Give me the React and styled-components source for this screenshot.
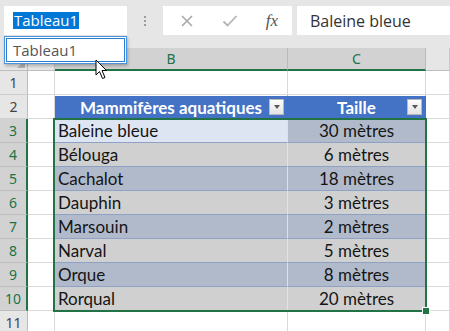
import React from 'react';
import styled, { createGlobalStyle } from 'styled-components';

const Global = createGlobalStyle`
  html, body { margin: 0; padding: 0; background: #fff; overflow: hidden; }
  * { box-sizing: border-box; }
`;

const Page = styled.div`
  position: relative;
  width: 450px;
  height: 331px;
  overflow: hidden;
  font-family: "Open Sans", "Noto Sans", sans-serif;
`;

const TopBar = styled.div`
  display: flex;
  align-items: flex-start;
  height: 48px;
  padding: 6px 0 0 4px;
  background: #e6e6e6;
`;

const NameBox = styled.div`
  position: relative;
  width: 123px;
  height: 29px;
  background: #fff;
  display: flex;
  align-items: center;
  padding-left: 9px;
  font-size: 15px;
`;

const Selected = styled.span`
  background: #0078d7;
  color: #fff;
  line-height: 17px;
  padding: 0 1px;
`;

const Dropdown = styled.div`
  position: absolute;
  top: 30px;
  left: 0;
  width: 123px;
  height: 28px;
  background: #fff;
  border: 1px solid #4d93d9;
  box-shadow: inset 0 0 0 1px #fff, inset 0 0 0 2px #2a7fd4, 1px 2px 3px rgba(0, 0, 0, 0.25);
  display: flex;
  align-items: center;
  padding-left: 8px;
  font-size: 15px;
  color: #555;
  z-index: 3;
`;

const Dots = styled.div`
  width: 36px;
  height: 29px;
  display: flex;
  flex-direction: column;
  align-items: center;
  justify-content: center;
  gap: 2px;
  span {
    width: 2px;
    height: 2px;
    background: #9a9a9a;
  }
`;

const FxButtons = styled.div`
  width: 129px;
  height: 29px;
  background: #fff;
  display: flex;
  align-items: center;
  justify-content: space-between;
  padding: 0 14px 0 17px;
`;

const Fx = styled.span`
  font-family: "Liberation Serif", serif;
  font-style: italic;
  font-size: 17px;
  color: #555;
`;

const FormulaInput = styled.div`
  flex: 1;
  margin-left: 5px;
  height: 29px;
  background: #fff;
  display: flex;
  align-items: center;
  padding-left: 13px;
  font-size: 16px;
  color: #333;
`;

const Sheet = styled.div`
  position: relative;
  display: grid;
  grid-template-columns: 28px 27px 233px 138px 1fr;
  grid-template-rows: 23px repeat(11, 24px);
`;

const Corner = styled.div`
  position: relative;
  background: #e6e6e6;
  border-right: 1px solid #bdbdbd;
  border-bottom: 1px solid #bdbdbd;
  &::after {
    content: '';
    position: absolute;
    right: 2px;
    bottom: 2px;
    border-left: 8px solid transparent;
    border-bottom: 8px solid #b4b4b4;
  }
`;

const ColHead = styled.div`
  display: flex;
  align-items: center;
  justify-content: center;
  font-family: "Noto Sans", sans-serif;
  font-size: 14px;
  background: ${p => (p.$selected ? '#d2d2d2' : '#e6e6e6')};
  color: ${p => (p.$selected ? '#217346' : '#444')};
  border-right: 1px solid ${p => (p.$selected ? '#bababa' : '#c8c8c8')};
  border-bottom: ${p => (p.$selected ? '2px solid #217346' : '1px solid #bdbdbd')};
`;

const RowHead = styled.div`
  display: flex;
  align-items: center;
  justify-content: center;
  font-family: "Noto Sans", sans-serif;
  font-size: 14px;
  background: ${p => (p.$selected ? '#d2d2d2' : '#e6e6e6')};
  color: ${p => (p.$selected ? '#217346' : '#444')};
  border-bottom: 1px solid ${p => (p.$selected ? '#bdbdbd' : '#cfcfcf')};
  border-right: ${p => (p.$selected ? '2px solid #217346' : '1px solid #bdbdbd')};
`;

const Cell = styled.div`
  border-right: 1px solid #dadada;
  border-bottom: 1px solid #dadada;
`;

const TableHead = styled.div`
  display: grid;
  grid-template-columns: 18px 1fr 18px;
  align-items: center;
  background: #4472c4;
  border-top: 1px solid #fff;
  border-bottom: 1px solid #4472c4;
  border-right: 1px solid #4472c4;
  color: #fff;
  font-family: Lato, sans-serif;
  font-weight: 700;
  font-size: 17px;
  text-align: center;
`;

const FilterButton = styled.span`
  width: 15px;
  height: 16px;
  display: flex;
  align-items: center;
  justify-content: center;
  background: linear-gradient(#fdfdfd, #e4e4e4);
  border: 1px solid #b9b9b9;
  &::after {
    content: '';
    border-left: 3.5px solid transparent;
    border-right: 3.5px solid transparent;
    border-top: 4px solid #595959;
  }
`;

const bandColor = p => {
  if (p.$active) return '#dde5f3';
  return p.$dark ? '#b1bacb' : '#d0d0d0';
};

const TableCell = styled.div`
  display: flex;
  align-items: center;
  justify-content: ${p => (p.$center ? 'center' : 'flex-start')};
  padding-left: ${p => (p.$center ? '0' : '3px')};
  background: ${bandColor};
  border-bottom: 1px solid #8ea2c6;
  border-right: 1px solid #e2e2e2;
  color: #151515;
  font-family: Lato, sans-serif;
  font-size: 17px;
`;

const Selection = styled.div`
  position: absolute;
  left: 53px;
  top: 70px;
  width: 374px;
  height: 194px;
  border: 2px solid #217346;
  pointer-events: none;
  &::after {
    content: '';
    position: absolute;
    right: -5px;
    bottom: -5px;
    width: 6px;
    height: 6px;
    background: #217346;
    border: 1px solid #fff;
  }
`;

const Cursor = styled.svg`
  position: absolute;
  left: 95px;
  top: 59px;
  z-index: 4;
`;

const animals = [
  ['Baleine bleue', '30 mètres'],
  ['Bélouga', '6 mètres'],
  ['Cachalot', '18 mètres'],
  ['Dauphin', '3 mètres'],
  ['Marsouin', '2 mètres'],
  ['Narval', '5 mètres'],
  ['Orque', '8 mètres'],
  ['Rorqual', '20 mètres'],
];

export default function App() {
  return (
    <Page>
      <Global />
      <TopBar>
        <NameBox>
          <Selected>Tableau1</Selected>
          <Dropdown>Tableau1</Dropdown>
        </NameBox>
        <Dots>
          <span />
          <span />
          <span />
        </Dots>
        <FxButtons>
          <svg width="14" height="14" viewBox="0 0 14 14">
            <path d="M2 2 L12 12 M12 2 L2 12" stroke="#a8a8a8" strokeWidth="1.6" fill="none" />
          </svg>
          <svg width="16" height="14" viewBox="0 0 16 14">
            <path d="M1.5 7.5 L5.5 11.5 L14.5 2" stroke="#b4b4b4" strokeWidth="1.8" fill="none" />
          </svg>
          <Fx>fx</Fx>
        </FxButtons>
        <FormulaInput>Baleine bleue</FormulaInput>
      </TopBar>

      <Sheet>
        <Corner />
        {/* column A's letter sits under the name-box dropdown */}
        <ColHead />
        <ColHead $selected>B</ColHead>
        <ColHead $selected>C</ColHead>
        <ColHead />

        <RowHead>1</RowHead>
        <Cell />
        <Cell />
        <Cell />
        <Cell />

        <RowHead>2</RowHead>
        <Cell />
        <TableHead>
          <span />
          <span>Mammifères aquatiques</span>
          <FilterButton />
        </TableHead>
        <TableHead>
          <span />
          <span>Taille</span>
          <FilterButton />
        </TableHead>
        <Cell />

        {animals.map(([name, size], i) => (
          <React.Fragment key={name}>
            <RowHead $selected>{i + 3}</RowHead>
            <Cell />
            <TableCell $dark={i % 2 === 0} $active={i === 0}>{name}</TableCell>
            <TableCell $dark={i % 2 === 0} $center>{size}</TableCell>
            <Cell />
          </React.Fragment>
        ))}

        <RowHead>11</RowHead>
        <Cell />
        <Cell />
        <Cell />
        <Cell />

        <Selection />
      </Sheet>

      <Cursor width="13" height="21" viewBox="0 0 13 21">
        <path d="M1 1 L1 16 L4.5 12.5 L7.5 19.5 L10 18.5 L7 11.5 L11.5 11.5 Z" fill="#fff" stroke="#000" strokeWidth="1" />
      </Cursor>
    </Page>
  );
}
